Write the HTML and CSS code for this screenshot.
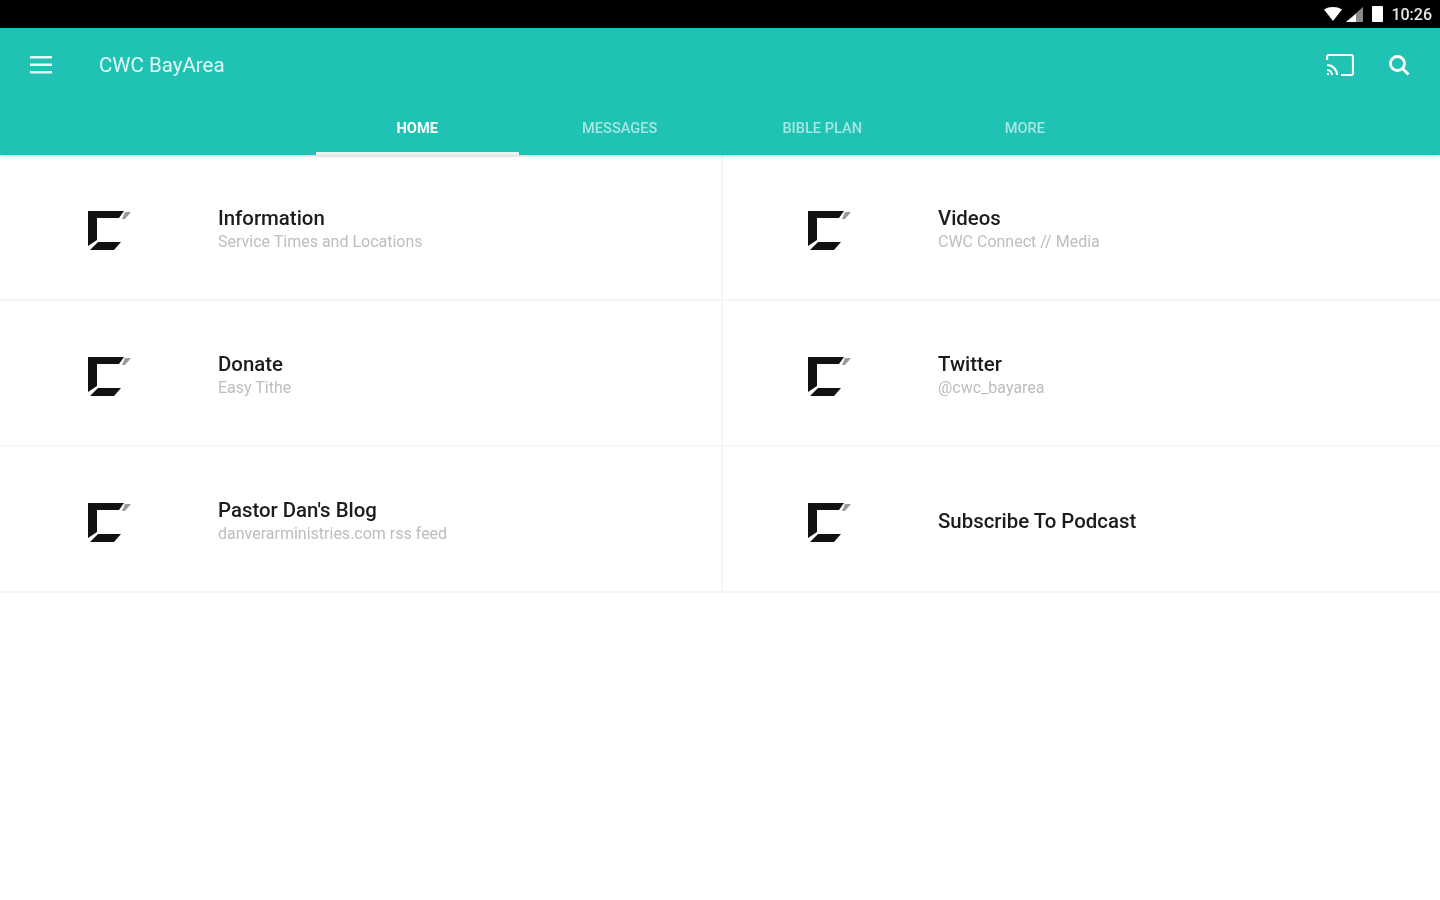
FILE: index.html
```html
<!DOCTYPE html>
<html>
<head>
    <meta charset="UTF-8">
    <title>CWC BayArea</title>
    <link rel="stylesheet" href="styles.css">
</head>
<body>

<div class="status-bar">
    <svg class="status-icon soft" width="18" height="14" viewBox="0 0 18 14"><path d="M0 2.500C2.500 .8 5.600 0 9 0s6.500 .8 9 2.500L9 14z" fill="#fff"/></svg>
    <svg class="status-icon soft" width="18" height="15" viewBox="0 0 18 15"><path d="M18 0v15H1z" fill="#8a8a8a"/><path d="M11 7v8H1l10-8z" fill="#fff"/></svg>
    <div class="battery soft"></div>
    <span class="clock soft">10:26</span>
</div>

<header class="app-bar">
    <div class="toolbar">
        <svg class="soft" width="22" height="18" viewBox="0 0 22 18"><path d="M0 0h22v2.500H0zM0 7.500h22V10H0zM0 15h22v2.500H0z" fill="#fff" opacity=".9"/></svg>
        <span class="app-title soft">CWC BayArea</span>
        <div class="toolbar-actions">
            <svg class="soft" width="28" height="22" viewBox="0 0 28 22" fill="none" stroke="#fff" stroke-width="2.200"><path d="M1 6V3a2 2 0 0 1 2-2h22a2 2 0 0 1 2 2v16a2 2 0 0 1-2 2H15"/><path d="M1 11a10 10 0 0 1 10 10M1 16a5 5 0 0 1 5 5"/><circle cx="2" cy="20" r="1.200" fill="#fff" stroke="none"/></svg>
            <svg class="soft" width="22" height="22" viewBox="0 0 22 22" fill="none" stroke="#fff" stroke-width="2.800"><circle cx="9.500" cy="9.500" r="7"/><path d="M14.500 14.500l6 6"/></svg>
        </div>
    </div>
    <nav class="tabs">
        <div class="tab active"><span class="soft">HOME</span></div>
        <div class="tab"><span class="soft">MESSAGES</span></div>
        <div class="tab"><span class="soft">BIBLE PLAN</span></div>
        <div class="tab"><span class="soft">MORE</span></div>
    </nav>
</header>

<main class="grid">
    <div class="item">
        <svg class="logo soft" viewBox="0 0 44 40"><use href="#cwc"/></svg>
        <div class="item-text soft"><div class="item-title">Information</div><div class="item-sub">Service Times and Locations</div></div>
    </div>
    <div class="item">
        <svg class="logo soft" viewBox="0 0 44 40"><use href="#cwc"/></svg>
        <div class="item-text soft"><div class="item-title">Videos</div><div class="item-sub">CWC Connect // Media</div></div>
    </div>
    <div class="item">
        <svg class="logo soft" viewBox="0 0 44 40"><use href="#cwc"/></svg>
        <div class="item-text soft"><div class="item-title">Donate</div><div class="item-sub">Easy Tithe</div></div>
    </div>
    <div class="item">
        <svg class="logo soft" viewBox="0 0 44 40"><use href="#cwc"/></svg>
        <div class="item-text soft"><div class="item-title">Twitter</div><div class="item-sub">@cwc_bayarea</div></div>
    </div>
    <div class="item">
        <svg class="logo soft" viewBox="0 0 44 40"><use href="#cwc"/></svg>
        <div class="item-text soft"><div class="item-title">Pastor Dan's Blog</div><div class="item-sub">danverarministries.com rss feed</div></div>
    </div>
    <div class="item">
        <svg class="logo soft" viewBox="0 0 44 40"><use href="#cwc"/></svg>
        <div class="item-text soft"><div class="item-title">Subscribe To Podcast</div></div>
    </div>
</main>

<svg class="defs" width="0" height="0">
    <symbol id="cwc" viewBox="0 0 44 40">
        <path d="M0 0H36L31 7H9V29L0 35z" fill="#111"/>
        <path d="M10 31H33L26 39H2z" fill="#111"/>
        <path d="M37 1h6l-6 7h-3z" fill="#999"/>
    </symbol>
</svg>

</body>
</html>
```

FILE: styles.css
```css
*, *::after, *::before {
    box-sizing: border-box;
}

html, body {
    height: 100%;
    margin: 0;
    padding: 0;
    background: #fff;
    font-family: Roboto, sans-serif;
    overflow: hidden;
}

/* the reference is an upscaled capture, so text and icons are a bit soft */
.soft {
    filter: blur(.6px);
}

.status-bar {
    display: flex;
    align-items: center;
    justify-content: flex-end;
    height: 28px;
    padding-right: 8px;
    background: #000;
    color: #e8e8e8;
}

.status-icon {
    margin-right: 3px;
}

.battery {
    width: 11px;
    height: 16px;
    margin: 0 8px 0 6px;
    border-radius: 1px;
    background: #fff;
}

.clock {
    font-size: 16px;
    font-weight: 500;
}

.app-bar {
    position: relative;
    height: 127px;
    background: #20c2b3;
    box-shadow: 0 1px 3px rgba(0, 0, 0, .2);
}

.toolbar {
    display: flex;
    align-items: center;
    height: 74px;
    padding: 0 30px;
}

.app-title {
    margin-left: 47px;
    font-size: 20.500px;
    color: #e3f7f5;
}

.toolbar-actions {
    display: flex;
    align-items: center;
    gap: 34px;
    margin-left: auto;
}

.tabs {
    display: flex;
    height: 53px;
    margin-left: 316px;
}

.tab {
    display: flex;
    align-items: center;
    justify-content: center;
    width: 202.500px;
    padding-top: 2px;
    border-bottom: 3px solid transparent;
    font-size: 14.600px;
    font-weight: 500;
    color: rgba(255, 255, 255, .6);
}

.tab.active {
    border-bottom-color: #e6f5f3;
    color: #fff;
    font-weight: 700;
}

.grid {
    display: grid;
    grid-template-columns: 723px 717px;
    grid-auto-rows: 146px;
}

.item {
    display: flex;
    align-items: center;
    padding-left: 88px;
    border-bottom: 2px solid #f6f6f6;
}

.item:nth-child(odd) {
    border-right: 2px solid #f6f6f6;
}

.item:nth-child(even) {
    padding-left: 85px;
}

.logo {
    flex: none;
    width: 44px;
    height: 40px;
    margin-top: 8px;
}

.item-text {
    margin-left: 86px;
    margin-top: 3px;
}

.item-title {
    font-size: 20.400px;
    font-weight: 500;
    line-height: 26px;
    color: #1c1c1c;
}

.item-sub {
    font-size: 16px;
    line-height: 22px;
    color: #bdbdbd;
}

.defs {
    position: absolute;
}
```
